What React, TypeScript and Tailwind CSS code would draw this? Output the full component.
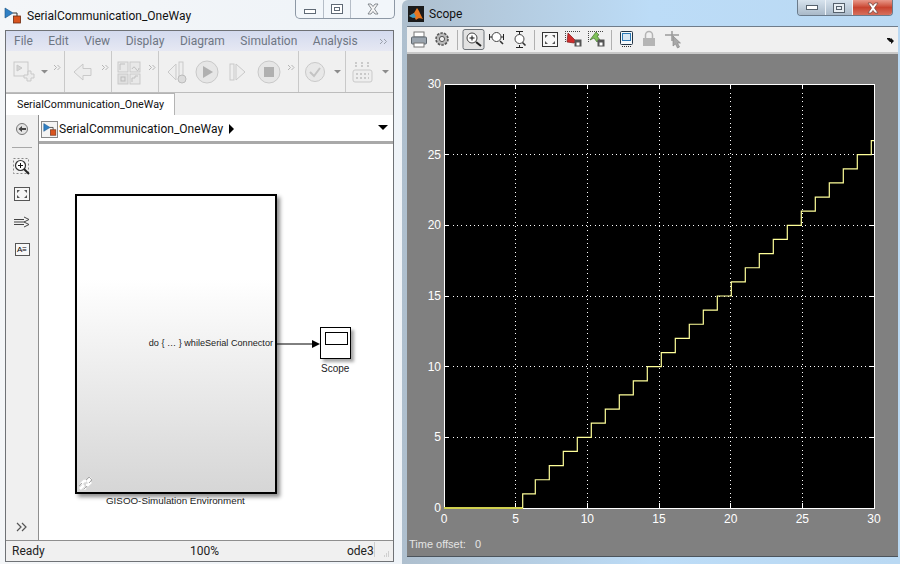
const ui = { fontFamily: 'Roboto, "Open Sans", sans-serif' }

function ModelIcon({ size = 18 }: { size?: number }) {
  return (
    <svg width={size} height={size} viewBox="0 0 18 18">
      <path d="M1 2 L1 12 L9 7 Z" fill="#2f7fc4" stroke="#17507f" strokeWidth="0.6" />
      <path d="M9 7 H13 V10" fill="none" stroke="#333" />
      <rect x="9.5" y="10" width="7" height="7" fill="#d9541e" stroke="#6b2a10" strokeWidth="0.8" />
    </svg>
  )
}

function CloseX({ fill, stroke }: { fill: string; stroke: string }) {
  return (
    <svg width="14" height="12" viewBox="0 0 14 12">
      <path d="M2 1 h3 l2 2.5 2 -2.5 h3 l-3.5 5 3.5 5 h-3 l-2 -2.5 -2 2.5 h-3 l3.5 -5 z" fill={fill} stroke={stroke} strokeWidth="0.8" />
    </svg>
  )
}

function More({ x, y }: { x: number; y: number }) {
  return (
    <path
      d={`M${x} ${y} l2.5 2.5 -2.5 2.5 M${x + 3.5} ${y} l2.5 2.5 -2.5 2.5`}
      fill="none"
      stroke="#b5b5b5"
    />
  )
}

function Drop({ x, y }: { x: number; y: number }) {
  return <path d={`M${x} ${y} h7 l-3.5 3.5 z`} fill="#8c8c8c" />
}

function ToolGroup({ width, children, last }: { width: number; children: React.ReactNode; last?: boolean }) {
  return (
    <div className={`h-full shrink-0 ${last ? '' : 'border-r border-[#c9c9c9]'}`} style={{ width }}>
      <svg width={width - 1} height={41} viewBox={`0 0 ${width - 1} 41`}>
        {children}
      </svg>
    </div>
  )
}

function ModelToolbar() {
  const g = '#c9c9c9'
  return (
    <div className="flex h-[42px] bg-[#f0f0f0] border-b border-[#bdbdbd]">
      <ToolGroup width={59}>
        <rect x="8" y="11" width="14" height="14" fill="#efefef" stroke={g} />
        <path d="M11 14 l5 3 -5 3 z" fill="#d4d4d4" stroke={g} />
        <path d="M22 20 h3 v3 h3 v4 h-3 v3 h-4 v-3 h-3 v-3 h4 z" fill="#ececec" stroke={g} />
        <Drop x={35} y={19} />
        <More x={48} y={14} />
      </ToolGroup>
      <ToolGroup width={47}>
        <path d="M9 21 l9 -8 v4.5 h8 v7 h-8 v4.5 z" fill="#ececec" stroke={g} />
        <More x={37} y={14} />
      </ToolGroup>
      <ToolGroup width={47}>
        <rect x="6" y="11" width="10" height="10" fill="#e8e8e8" stroke={g} />
        <rect x="18" y="11" width="10" height="10" fill="#e8e8e8" stroke={g} />
        <rect x="6" y="23" width="10" height="10" fill="#e0e0e0" stroke={g} />
        <rect x="18" y="23" width="10" height="10" fill="#e8e8e8" stroke={g} />
        <path d="M8 19 v-6 h5 M20 18 q2 -4 4 0 t3 -1 M20 31 v-4 h3 v-2 h3" fill="none" stroke="#c0c0c0" />
        <rect x="9" y="26" width="4" height="4" fill="none" stroke="#bbb" />
        <More x={37} y={14} />
      </ToolGroup>
      <ToolGroup width={140}>
        <path d="M9 21 l8 -8 v16 z" fill="#eee" stroke={g} />
        <rect x="20" y="11" width="4" height="16" fill="#eee" stroke={g} />
        <circle cx="23" cy="28" r="4" fill="#dcdcdc" stroke="#bcbcbc" />
        <circle cx="48" cy="21" r="11" fill="#e6e6e6" stroke={g} />
        <path d="M44 15 l10 6 -10 6 z" fill="#b0b0b0" />
        <rect x="71" y="13" width="4" height="16" fill="#eee" stroke={g} />
        <path d="M77 13 l9 8 -9 8 z" fill="#eee" stroke={g} />
        <circle cx="110" cy="21" r="11" fill="#e6e6e6" stroke={g} />
        <rect x="105" y="16" width="10" height="10" fill="#b0b0b0" />
        <More x={129} y={14} />
      </ToolGroup>
      <ToolGroup width={47}>
        <circle cx="16" cy="21" r="9.5" fill="#e8e8e8" stroke={g} />
        <path d="M11 21 l4 4 6 -8" fill="none" stroke="#c4c4c4" strokeWidth="2" />
        <Drop x={35} y={19} />
      </ToolGroup>
      <ToolGroup width={47} last>
        <rect x="7" y="19" width="19" height="12" rx="2" fill="#eee" stroke={g} />
        <path d="M10 23 h13 M10 27 h13" stroke="#a5a5a5" strokeDasharray="2 2" />
        <path d="M10 11 v5 M16 11 v5 M22 11 v5" stroke="#a5a5a5" strokeDasharray="2 1" />
        <Drop x={36} y={19} />
      </ToolGroup>
    </div>
  )
}

function SideIcons() {
  return (
    <div className="w-[32px] shrink-0 bg-[#f0f0f0] flex flex-col items-center relative">
      <svg width="14" height="14" viewBox="0 0 14 14" className="mt-[7px]">
        <circle cx="7" cy="7" r="5.5" fill="#e4e4e4" stroke="#777" />
        <path d="M3.5 7 l3.5 -3 v2 h4 v2 h-4 v2 z" fill="#444" />
      </svg>
      <div className="w-[20px] h-px bg-[#a8a8a8] mt-[11px]" />
      <svg width="18" height="18" viewBox="0 0 18 18" className="mt-[10px]">
        <rect x="0.5" y="0.5" width="15" height="15" fill="none" stroke="#888" strokeDasharray="2 2" />
        <circle cx="7.5" cy="7.5" r="5" fill="#fff" stroke="#333" strokeWidth="1.2" />
        <path d="M5 7.5 h5 M7.5 5 v5" stroke="#111" />
        <path d="M11 11 l5 5" stroke="#222" strokeWidth="2" />
      </svg>
      <svg width="16" height="14" viewBox="0 0 16 14" className="mt-[11px]">
        <rect x="0.5" y="0.5" width="15" height="13" fill="#f6f6f6" stroke="#555" />
        <path d="M3 3 h3 L3 6 z M13 3 h-3 L13 6 z M3 11 h3 L3 8 z M13 11 h-3 L13 8 z" fill="#555" />
      </svg>
      <svg width="16" height="12" viewBox="0 0 16 12" className="mt-[15px]">
        <path d="M0 3.5 h11 M0 8.5 h11 M0 6 h11" stroke="#444" fill="none" />
        <path d="M10 1 l5 2.5 -5 2.5 M10 6 l5 2.5 -5 2.5" fill="#f4f4f4" stroke="#444" />
      </svg>
      <div className="mt-[15px] w-[15px] h-[13px] border border-[#555] bg-[#f8f8f8] flex items-center justify-center text-[8px] leading-none font-['Liberation_Sans'] text-black">
        A≡
      </div>
      <svg width="12" height="10" viewBox="0 0 12 10" className="absolute left-[10px] bottom-[8px]">
        <path d="M1 1 l4 4 -4 4 M6 1 l4 4 -4 4" fill="none" stroke="#555" strokeWidth="1.2" />
      </svg>
    </div>
  )
}

function Diagram() {
  return (
    <div className="relative flex-1 bg-white font-['Liberation_Sans'] text-[9px] leading-none text-[#222]">
      {/* blocks sit at fixed spots on the canvas */}
      <div className="absolute left-[36px] top-[50px] w-[202px] h-[300px] border-2 border-black bg-gradient-to-b from-white from-[28%] to-[#d6d6d6] shadow-[3px_3px_4px_rgba(0,0,0,0.45)]">
        <svg width="16" height="16" viewBox="0 0 16 16" className="absolute left-[1px] bottom-[1px]">
          <path d="M2 14 l4 -4 M9 7 l4 -4 M3 9 l3 -3 h2 M13 7 l-3 3 h-2 M8 13 l-2 1" fill="none" stroke="#fff" strokeWidth="2.5" />
          <path d="M1 11 l3 -3 M6 14 l3 -3 M8 5 l3 -3 l3 3 l-3 3" fill="none" stroke="#a9a9a9" strokeWidth="1" />
        </svg>
        <div className="absolute right-[2px] top-[143px] text-[9.15px] whitespace-nowrap">do {'{'} … {'}'} whileSerial Connector</div>
      </div>
      <div className="absolute left-[67px] top-[352px] text-[9.8px] whitespace-nowrap">GISOO-Simulation Environment</div>
      <svg width="46" height="10" viewBox="0 0 46 10" className="absolute left-[238px] top-[195px]">
        <path d="M0 5 H40" stroke="#000" />
        <path d="M35 1 L43 5 L35 9 Z" fill="#000" />
      </svg>
      <div className="absolute left-[281px] top-[183px] w-[31px] h-[32px] border border-black bg-white shadow-[3px_3px_3px_rgba(0,0,0,0.35)]">
        <div className="ml-[4px] mt-[4px] w-[23px] h-[13px] border border-black" />
      </div>
      <div className="absolute left-[282px] top-[220px] text-[10px]">Scope</div>
    </div>
  )
}

function ModelWindow() {
  return (
    <div className="w-[402px] h-full shrink-0 pl-[5px] pr-[8px] pb-[2px] flex flex-col">
      <div className="h-[30px] shrink-0 flex items-start relative">
        <div className="mt-[6px] -ml-[1px]"><ModelIcon /></div>
        <div className="ml-[5px] mt-[7px] text-[12px] leading-[18px] text-[#111]" style={ui}>SerialCommunication_OneWay</div>
        <div className="absolute right-[-1px] top-0 w-[100px] h-[19px] flex border border-t-0 border-[#8d98a5] rounded-b-[5px] bg-[#f2f6fa]">
          <div className="w-[28px] border-r border-[#b5bdc7] flex items-center justify-center">
            <div className="w-[12px] h-[5px] mt-[4px] border border-[#606a76] bg-white" />
          </div>
          <div className="w-[27px] border-r border-[#b5bdc7] flex items-center justify-center">
            <div className="w-[12px] h-[10px] border border-[#606a76] bg-white flex items-center justify-center">
              <div className="w-[6px] h-[4px] border border-[#606a76]" />
            </div>
          </div>
          <div className="flex-1 flex items-center justify-center"><CloseX fill="#f4f4f4" stroke="#6d737a" /></div>
        </div>
      </div>
      <div className="flex-1 min-h-0 flex flex-col border border-[#6f7276] bg-[#f0f0f0]" style={ui}>
        <div className="h-[20px] shrink-0 flex items-center relative bg-gradient-to-b from-[#d3daee] to-[#e6e8f3] text-[12px] text-[#6e7683]">
          <span className="ml-[8px]">File</span>
          <span className="ml-[15.5px]">Edit</span>
          <span className="ml-[15.5px]">View</span>
          <span className="ml-[15.5px]">Display</span>
          <span className="ml-[15.5px]">Diagram</span>
          <span className="ml-[15.5px]">Simulation</span>
          <span className="ml-[15.5px]">Analysis</span>
          <svg width="8" height="8" viewBox="0 0 8 8" className="absolute right-[5px] top-[7px]">
            <path d="M0 1 l2.5 2.5 -2.5 2.5 M4 1 l2.5 2.5 -2.5 2.5" fill="none" stroke="#9aa0ab" />
          </svg>
        </div>
        <ModelToolbar />
        <div className="h-[22px] shrink-0 flex">
          <div className="w-[169px] h-[22px] bg-white border-r border-t border-[#b4b4b4] text-[10.75px] leading-[21px] pl-[11px] text-[#111]">
            SerialCommunication_OneWay
          </div>
        </div>
        <div className="flex-1 min-h-0 flex">
          <SideIcons />
          <div className="flex-1 flex flex-col border-l border-[#8f8f8f]">
            <div className="h-[29px] shrink-0 bg-white border-b-[3px] border-[#a9a9a9] pt-[2px] flex items-center relative text-[12px] text-[#111]">
              <div className="ml-[2px] w-[17px] h-[17px] border border-[#888] bg-[#f4f4f4] flex items-center justify-center"><ModelIcon size={14} /></div>
              <span className="ml-[1px]">SerialCommunication_OneWay</span>
              <div className="ml-[6px] w-0 h-0 border-y-[5px] border-y-transparent border-l-[5px] border-l-black" />
              <div className="absolute right-[5px] top-[10px] w-0 h-0 border-x-[5px] border-x-transparent border-t-[5px] border-t-black" />
            </div>
            <Diagram />
          </div>
        </div>
        <div className="h-[21px] shrink-0 border-t border-[#8f8f8f] relative text-[12px] leading-[20px] text-[#222]">
          <span className="absolute left-[6px]">Ready</span>
          <span className="absolute left-[184px]">100%</span>
          <span className="absolute left-[341px]">ode3</span>
          <div className="absolute left-[368px] top-[1px] w-px h-[15px] bg-[#cfcfcf]" />
          <svg width="8" height="8" viewBox="0 0 8 8" className="absolute right-[3px] bottom-[2px]">
            <path d="M6 1 h1 M4 3 h1 M6 3 h1 M2 5 h1 M4 5 h1 M6 5 h1" stroke="#b0b0b0" />
          </svg>
        </div>
      </div>
    </div>
  )
}

const xTicks = [0, 5, 10, 15, 20, 25, 30]
const yTicks = [0, 5, 10, 15, 20, 25, 30]

function tx(t: number) {
  return 444 + t * (430 / 30)
}
function ty(v: number) {
  return 508 - v * (424 / 30)
}

function stairs() {
  let d = `M522.7 ${ty(0)} V${ty(1)} H535.3`
  for (let n = 2; n <= 25; n++) {
    const x = 535.3 + (n - 2) * 14
    d += ` V${ty(n)} H${x + 14}`
  }
  d += ` V${ty(26)} H874`
  return d
}

// plot drawn in page coords, offset to the gray panel origin
function ScopePlot() {
  return (
    <svg width="491" height="503" viewBox="407 54 491 503" className="block" shapeRendering="crispEdges">
      <rect x="444" y="84" width="430" height="424" fill="#000" />
      {xTicks.slice(1, -1).map((t) => (
        <g key={t}>
          <path d={`M${tx(t)} 84 V508`} stroke="#fff" strokeDasharray="1 3.3" />
          <path d={`M${tx(t)} 84 v5 M${tx(t)} 508 v-5`} stroke="#fff" />
        </g>
      ))}
      {yTicks.slice(1, -1).map((v) => (
        <g key={v}>
          <path d={`M444 ${ty(v)} H874`} stroke="#fff" strokeDasharray="1 3.3" />
          <path d={`M444 ${ty(v)} h5 M874 ${ty(v)} h-5`} stroke="#fff" />
        </g>
      ))}
      <rect x="444" y="84" width="430" height="424" fill="none" stroke="#fff" />
      <path d="M444 507.5 H522.7" stroke="#d0d050" strokeWidth="2" />
      <path d={stairs()} fill="none" stroke="#ffff99" strokeWidth="1.2" shapeRendering="auto" />
      <g fontFamily="Liberation Sans" fontSize="12" fill="#fff" shapeRendering="auto">
        {xTicks.map((t) => (
          <text key={t} x={tx(t)} y="523" textAnchor="middle">{t}</text>
        ))}
        {yTicks.map((v) => (
          <text key={v} x="441" y={ty(v) + 4} textAnchor="end">{v}</text>
        ))}
      </g>
    </svg>
  )
}

function ScopeToolbar() {
  return (
    <div className="h-[27px] shrink-0 bg-[#f0f0f0] border-b-2 border-[#c9c9c9] flex items-center relative">
      <svg width="491" height="24" viewBox="407 27 491 24" className="block">
        {/* printer */}
        <rect x="414" y="31" width="10" height="5" fill="#fff" stroke="#777" />
        <rect x="411.5" y="36" width="15" height="7" rx="1" fill="#9aa4ae" stroke="#5f6870" />
        <rect x="414" y="42" width="10" height="4" fill="#fff" stroke="#777" />
        {/* gear */}
        <circle cx="442" cy="38" r="6" fill="#b9b9b9" stroke="#555" strokeWidth="1.6" strokeDasharray="2.5 1.2" />
        <circle cx="442" cy="38" r="2.6" fill="#f0f0f0" stroke="#555" />
        <path d="M457.5 29 V49 M534.5 29 V49 M611.5 29 V49" stroke="#b0b0b0" />
        {/* active zoom in */}
        <rect x="463" y="28.5" width="21" height="20" rx="2" fill="#e2e2e2" stroke="#6c7278" />
        <circle cx="472" cy="37" r="5" fill="#fff" stroke="#444" />
        <path d="M469.5 37 h5 M472 34.5 v5" stroke="#111" />
        <path d="M476 41 l5 4" stroke="#222" strokeWidth="2" />
        {/* zoom x */}
        <circle cx="496.5" cy="36" r="4.5" fill="#fff" stroke="#444" />
        <path d="M500 40 l3 3" stroke="#333" strokeWidth="1.6" />
        <path d="M489.5 33 v6 M503.5 33 v6 M489.5 36 h2.5 M501 36 h2.5" stroke="#222" />
        {/* zoom y */}
        <path d="M516 30.5 h7 M516 46.5 h7 M519.5 31 v3 M519.5 44 v2" stroke="#222" />
        <circle cx="519.5" cy="38" r="4.5" fill="#fff" stroke="#444" />
        <path d="M522.5 41.5 l3 3" stroke="#333" strokeWidth="1.6" />
        {/* fit */}
        <rect x="542.5" y="31.5" width="15" height="14" fill="#f8f8f8" stroke="#333" />
        <path d="M545 34 h3 l-3 3 z M555 34 h-3 l3 3 z M545 43 h3 l-3 -3 z M555 43 h-3 l3 -3 z" fill="#555" />
        {/* save / restore axes */}
        <path d="M565 30.5 h16 M565.5 30 v12" stroke="#444" strokeDasharray="1 1" />
        <path d="M568 32 l8 8 -2 2 -7 -1 z" fill="#d02c2c" stroke="#801818" strokeWidth="0.7" />
        <rect x="574.5" y="38.5" width="7" height="7" fill="#555" />
        <rect x="576.5" y="41.5" width="3" height="3" fill="#fff" />
        <path d="M588 30.5 h16 M588.5 30 v12" stroke="#444" strokeDasharray="1 1" />
        <path d="M590 39 l6 -8 3 3 -2 1 3 4 -3 2 -3 -4 z" fill="#7fc25a" stroke="#3f6f2a" strokeWidth="0.7" />
        <rect x="597.5" y="38.5" width="7" height="7" fill="#555" />
        <rect x="599.5" y="41.5" width="3" height="3" fill="#fff" />
        {/* monitor */}
        <rect x="620.5" y="30.5" width="12" height="13" rx="1" fill="#f4f8fb" stroke="#234" />
        <rect x="622.5" y="32.5" width="8" height="7" fill="#d8e6f2" stroke="#2a77b4" />
        <path d="M622 45.5 h9" stroke="#333" strokeDasharray="1 1" />
        {/* lock */}
        <path d="M645.5 37 v-3 a3.5 3.5 0 0 1 7 0 v3" fill="none" stroke="#b3b3b3" strokeWidth="1.5" />
        <rect x="643" y="37" width="12" height="8" fill="#b5b5b5" />
        {/* cursor */}
        <path d="M665 34 h14 M672 30 v10" stroke="#9a9a9a" strokeWidth="1.5" />
        <path d="M673 35 l0 10 2.5 -2 2 4 2 -1 -2 -4 3 0 z" fill="#a8a8a8" stroke="#808080" strokeWidth="0.6" />
        {/* chevron */}
        <path d="M887 37 h3 l1 1 v-1 l3 3 -3 3 v-2 h-1 l-3 -3 z" fill="#111" />
      </svg>
    </div>
  )
}

function ScopeWindow() {
  return (
    <div className="flex-1 h-full min-w-0 pl-[5px] pr-[2px] pb-[7px] flex flex-col relative bg-gradient-to-r from-[#aebfce] via-[#bcdcf7] to-[#bad9f3] rounded-tl-[6px]">
      <div className="h-[26px] shrink-0 flex items-center relative">
        <svg width="16" height="16" viewBox="0 0 16 16" className="ml-[1px] mt-[2px]">
          <rect width="16" height="16" fill="#1b1b1b" />
          <path d="M1 10 L6 7 L9 2 C11 4 13 10 15 13 C12 12 10 12 8 14 C7 11 4 10 1 10 Z" fill="#e87820" />
          <path d="M1 10 L6 7 L8 11 L5 12 Z" fill="#3e9cc4" />
        </svg>
        <span className="ml-[5px] mt-[2px] text-[12px] text-[#111]" style={ui}>Scope</span>
        <div className="absolute right-[5px] top-0 w-[96px] h-[16px] flex border border-t-0 border-[#6a7a8a] rounded-b-[4px] overflow-hidden">
          <div className="w-[28px] border-r border-[#eef3f8] bg-gradient-to-b from-[#d7e3ee] to-[#a9b9c8] flex items-center justify-center">
            <div className="w-[12px] h-[5px] border border-[#56616c] bg-white" />
          </div>
          <div className="w-[27px] border-r border-[#eef3f8] bg-gradient-to-b from-[#d7e3ee] to-[#a9b9c8] flex items-center justify-center">
            <div className="w-[12px] h-[10px] border border-[#56616c] bg-[#e8eef3] flex items-center justify-center">
              <div className="w-[6px] h-[4px] border border-[#56616c]" />
            </div>
          </div>
          <div className="flex-1 bg-gradient-to-b from-[#e8988a] via-[#c8432f] to-[#d66f5c] flex items-center justify-center"><CloseX fill="#fff" stroke="#7a4a44" /></div>
        </div>
      </div>
      <div className="flex-1 min-h-0 flex flex-col border-t border-[#6f7c8a] border-b border-b-[#4c545c] bg-[#808080]">
        <ScopeToolbar />
        <div className="flex-1 min-h-0 relative">
          <ScopePlot />
          <div className="absolute left-[2px] top-[485px] text-[11px] leading-none text-[#e4e4e4] font-['Liberation_Sans'] whitespace-pre">Time offset:   0</div>
        </div>
      </div>
    </div>
  )
}

export default function App() {
  return (
    <div className="w-[900px] h-[564px] flex overflow-hidden bg-gradient-to-r from-[#f4f6f8] via-[#eef3f8] to-[#eef1f5]">
      <ModelWindow />
      <ScopeWindow />
    </div>
  )
}
